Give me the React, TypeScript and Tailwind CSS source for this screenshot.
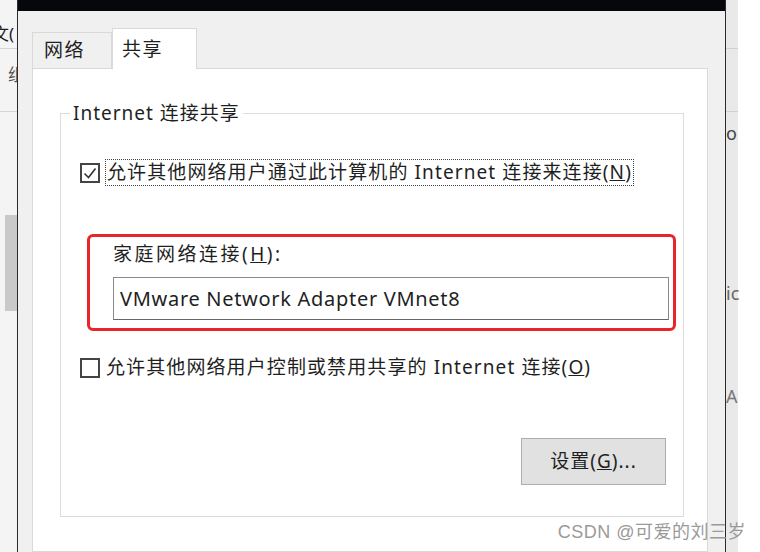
const font = { fontFamily: '"Noto Sans", "Noto Sans CJK SC", sans-serif' };

const CheckBox = ({ checked }: { checked: boolean }) => (
  <span className="flex h-[20px] w-[20px] shrink-0 items-center justify-center border-2 border-[#444] bg-white">
    {checked && (
      <svg width="16" height="16" viewBox="0 0 16 16" fill="none">
        <path d="M2.5 8.5 L6.5 12.5 L13.5 3.5" stroke="#333" strokeWidth="1.6" />
      </svg>
    )}
  </span>
);

const App = () => {
  return (
    <div
      className="flex h-[552px] w-[760px] overflow-hidden bg-white text-[#1f1f1f]"
      style={font}
    >
      {/* 뒤쪽 창 왼쪽 조각 */}
      <div className="flex w-[17px] shrink-0 flex-col overflow-hidden bg-[#f4f4f4]">
        <div className="h-[49px] whitespace-nowrap border-b border-[#d6d6d6] pt-[22px] text-[17px] leading-[24px] -ml-[8px]">
          文(
        </div>
        <div className="h-[63px] whitespace-nowrap border-b border-[#d6d6d6] pt-[14px] pl-[8px] text-[17px] leading-[24px] text-[#555]">
          组
        </div>
        <div className="mt-[103px] ml-[5px] h-[96px] bg-[#c9c9c9]" />
      </div>

      {/* 대화상자 */}
      <div className="flex w-[709px] shrink-0 flex-col border-x border-[#2a2a2a] bg-[#f0f0f0]">
        <div className="h-[11px] bg-[#05070d]" />
        <div className="flex flex-1 flex-col pl-[14px] pr-[17px] pt-[17px]">
          {/* 탭 */}
          <div className="flex h-[40px] items-end">
            <div className="flex h-[36px] w-[80px] items-center border border-b-0 border-[#d9d9d9] bg-[#f0f0f0] pl-[11px] text-[19px] tracking-[1.5px]">
              网络
            </div>
            <div className="relative z-10 -mb-px flex h-[41px] w-[85px] items-center border border-b-0 border-[#d9d9d9] bg-white pl-[9px] text-[19px] tracking-[1.5px]">
              共享
            </div>
          </div>

          {/* 탭 내용 */}
          <div className="flex-1 border border-[#d9d9d9] bg-white pl-[27px] pr-[23px] pt-[44px]">
            <div className="relative h-[404px] border border-[#dcdcdc]">
              <span className="absolute -top-[14px] left-[9px] bg-white px-[3px] text-[19px] leading-[26px] tracking-[1px]">
                Internet 连接共享
              </span>

              <div className="flex flex-col pl-[19px] pt-[45px]">
                <div className="flex items-center">
                  <CheckBox checked />
                  <span className="ml-[5px] border border-dotted border-[#444] px-[1px] text-[19px] leading-[25px] tracking-[1.1px]">
                    允许其他网络用户通过此计算机的 Internet 连接来连接(<span className="underline">N</span>)
                  </span>
                </div>

                <div className="mt-[48px] ml-[7px] flex h-[97px] w-[589px] flex-col rounded-[6px] border-[3px] border-[#e8262a] pl-[23px] pr-[4px] pt-[4px]">
                  <div className="text-[19px] leading-[26px] tracking-[2.5px]">
                    家庭网络连接(<span className="underline">H</span>):
                  </div>
                  <div className="mt-[10px] flex h-[43px] items-center border border-[#8a8a8a] border-b-[#666] bg-white pl-[6px] text-[20px] tracking-[0.7px]">
                    VMware Network Adapter VMnet8
                  </div>
                </div>

                <div className="mt-[24px] flex items-center">
                  <CheckBox checked={false} />
                  <span className="ml-[6px] text-[19px] leading-[25px] tracking-[1.1px]">
                    允许其他网络用户控制或禁用共享的 Internet 连接(<span className="underline">O</span>)
                  </span>
                </div>

                <div className="mt-[58px] flex justify-end pr-[17px]">
                  <div className="flex h-[47px] w-[145px] items-center justify-center border border-[#adadad] bg-[#e1e1e1] text-[19px] tracking-[1px]">
                    设置(<span className="underline">G</span>)...
                  </div>
                </div>
              </div>
            </div>
          </div>
        </div>
      </div>

      {/* 뒤쪽 창 오른쪽 조각 */}
      <div className="relative flex flex-1 flex-col">
        <div className="flex w-[12px] flex-1 flex-col bg-[#e9e9e9] text-[18px] text-[#444]">
          <div className="h-[49px] border-b border-[#d0d0d0]" />
          <div className="h-[63px] border-b border-[#d0d0d0]" />
          <div className="mt-[8px] leading-[26px]">o</div>
          <div className="mt-[134px] leading-[26px] text-[#666]">ic</div>
          <div className="mt-[77px] leading-[26px] text-[#777]">A</div>
        </div>
        <div
          className="absolute bottom-[6px] right-[14px] whitespace-nowrap text-[18px] tracking-[0.5px] text-[#9a9a9a]"
          style={{ fontFamily: '"Liberation Sans", "Noto Sans CJK SC", sans-serif' }}
        >
          CSDN @可爱的刘三岁
        </div>
      </div>
    </div>
  );
};

export default App;
